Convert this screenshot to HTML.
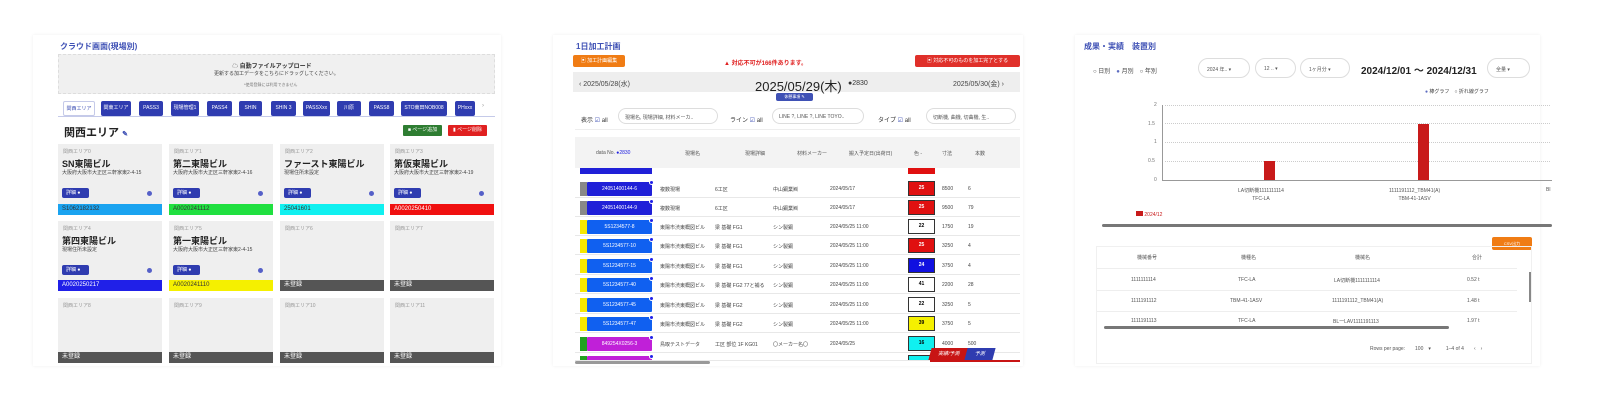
<!DOCTYPE html>
<html><head><meta charset="utf-8">
<style>
*{margin:0;padding:0;box-sizing:border-box}
body{width:1600px;height:406px;background:#fff;position:relative;overflow:hidden;font-family:"Liberation Sans","Noto Sans CJK JP",sans-serif;color:#333}
.a{position:absolute;white-space:nowrap}
.ttl{color:#3f51b5;font-weight:bold;font-size:8px}
.tab{position:absolute;top:101px;height:15px;background:#2f3cb0;color:#fff;font-size:5px;line-height:15px;text-align:center;border-radius:2px}
.card{position:absolute;width:104px;background:#efefef}
.card .lb{position:absolute;left:5px;top:4px;font-size:5px;color:#999}
.card .nm{position:absolute;left:4px;top:13px;font-size:9px;font-weight:bold;color:#222}
.card .ad{position:absolute;left:4px;top:25px;font-size:5px;color:#444}
.card .bt{position:absolute;left:4px;top:44px;width:27px;height:10px;background:#2f3cb0;border-radius:2px;color:#fff;font-size:5px;line-height:10px;padding-left:4px}
.card .gr{position:absolute;right:10px;top:47px;width:5px;height:5px;border-radius:50%;background:#5560c8}
.card .bar{position:absolute;left:0;bottom:0;width:104px;height:11px;font-size:6px;line-height:11px;padding-left:4px;color:#333}
.th{position:absolute;font-size:5px;color:#555}
.row{position:absolute;left:575px;width:445px;height:19px;border-bottom:1px solid #e8e8e8}
.row span{position:absolute;font-size:5px;color:#444;top:7px}
.sel{position:absolute;height:20px;border:1px solid #ddd;border-radius:10px;font-size:5px;color:#555;padding:7px 8px}
</style></head><body>

<!-- panel 1 -->
<div class="a" style="left:33px;top:35px;width:468px;height:331px;background:#fff;box-shadow:0 0 3px #eee"></div>
<div class="a ttl" style="left:60px;top:41px">クラウド画面(現場別)</div>
<div class="a" style="left:58px;top:54px;width:437px;height:40px;background:#f0f0f0;border:1px dashed #ddd"></div>
<div class="a" style="left:232px;top:61px;font-size:6px;font-weight:bold;color:#333">☁ 自動ファイルアップロード</div>
<div class="a" style="left:214px;top:70px;font-size:5px;color:#444">更新する加工データをこちらにドラッグしてください。</div>
<div class="a" style="left:244px;top:82px;font-size:4px;color:#777">*使用登録には利用できません</div>
<div class="a" style="left:58px;top:116px;width:437px;height:1px;background:#c5cae9"></div>
<div class="tab" style="left:63px;width:32px;background:#fff;color:#3f51b5;border:1px solid #c5cae9">関西エリア</div>
<div class="tab" style="left:101px;width:30px">関東エリア</div>
<div class="tab" style="left:139px;width:24px">PASS3</div>
<div class="tab" style="left:171px;width:28px">現場管理1</div>
<div class="tab" style="left:207px;width:25px">PASS4</div>
<div class="tab" style="left:239px;width:23px">SHIN</div>
<div class="tab" style="left:271px;width:25px">SHIN 3</div>
<div class="tab" style="left:303px;width:27px">PASSXxx</div>
<div class="tab" style="left:337px;width:24px">川原</div>
<div class="tab" style="left:369px;width:25px">PASS8</div>
<div class="tab" style="left:401px;width:46px">STO東田NOB008</div>
<div class="tab" style="left:455px;width:20px">PHxxx</div>
<div class="a" style="left:482px;top:103px;font-size:6px;color:#999">›</div>
<div class="a" style="left:64px;top:124px;font-size:11px;font-weight:bold;color:#222">関西エリア <span style="color:#3f51b5;font-size:7px">✎</span></div>
<div class="a" style="left:403px;top:125px;width:39px;height:11px;background:#2e7d32;color:#fff;font-size:5px;line-height:11px;text-align:center;border-radius:1px">■ ページ追加</div>
<div class="a" style="left:448px;top:125px;width:39px;height:11px;background:#e02020;color:#fff;font-size:5px;line-height:11px;text-align:center;border-radius:1px">▮ ページ削除</div>
<div id="cards"></div>

<!-- panel 2 -->
<div class="a" style="left:553px;top:35px;width:470px;height:331px;background:#fff;box-shadow:0 0 3px #eee"></div>
<div class="a ttl" style="left:576px;top:41px">1日加工計画</div>
<div class="a" style="left:573px;top:55px;width:52px;height:12px;background:#f07c14;color:#fff;font-size:5px;line-height:12px;text-align:center;border-radius:2px">▣ 加工計画編集</div>
<div class="a" style="left:724px;top:58px;font-size:6px;font-weight:bold;color:#e02020">▲ 対応不可が166件あります。</div>
<div class="a" style="left:915px;top:55px;width:105px;height:12px;background:#e0302a;color:#fff;font-size:5px;line-height:12px;text-align:center;border-radius:2px">▣ 対応不可のものを加工完了とする</div>
<div class="a" style="left:573px;top:72px;width:447px;height:20px;background:#eeeeee"></div>
<div class="a" style="left:579px;top:79px;font-size:7px;color:#444">‹ 2025/05/28(水)</div>
<div class="a" style="left:755px;top:76px;font-size:13px;color:#222">2025/05/29(木)</div>
<div class="a" style="left:848px;top:80px;font-size:7px;color:#333">●2830</div>
<div class="a" style="left:953px;top:79px;font-size:7px;color:#444">2025/05/30(金) ›</div>
<div class="a" style="left:776px;top:93px;width:37px;height:8px;background:#3f51b5;border-radius:2px;color:#fff;font-size:4px;line-height:8px;text-align:center">休憩事項 ✎</div>
<div class="a" style="left:575px;top:105px;width:445px;height:25px;border-bottom:1px solid #eee"></div>
<div class="a" style="left:581px;top:115px;font-size:6px">表示 <span style="color:#3f51b5">☑</span> all</div>
<div class="sel" style="left:618px;top:108px;width:100px;height:16px;padding:5px 6px">現場名, 現場詳細, 材料メーカ..</div>
<div class="a" style="left:730px;top:115px;font-size:6px">ライン <span style="color:#3f51b5">☑</span> all</div>
<div class="sel" style="left:772px;top:108px;width:92px;height:16px;padding:5px 6px">LINE ?, LINE ?, LINE TOYO..</div>
<div class="a" style="left:878px;top:115px;font-size:6px">タイプ <span style="color:#3f51b5">☑</span> all</div>
<div class="sel" style="left:926px;top:108px;width:90px;height:16px;padding:5px 6px">切断機, 曲機, 切曲機, 生..</div>
<div class="a" style="left:575px;top:137px;width:445px;height:31px;background:#f3f3f3"></div>
<div class="th" style="left:596px;top:150px">data No. <span style="color:#2020e0">●2830</span></div>
<div class="th" style="left:685px;top:150px">現場名</div>
<div class="th" style="left:745px;top:150px">現場詳細</div>
<div class="th" style="left:797px;top:150px">材料メーカー</div>
<div class="th" style="left:849px;top:150px">搬入予定日(出荷日)</div>
<div class="th" style="left:914px;top:150px">色 -</div>
<div class="th" style="left:942px;top:150px">寸法</div>
<div class="th" style="left:975px;top:150px">本数</div>
<div id="rows"></div>
<div class="a" style="left:575px;top:361px;width:135px;height:3px;background:#999;border-radius:2px"></div>
<div class="a" style="left:930px;top:348px;width:38px;height:12px;background:#c81414;color:#fff;font-size:5px;line-height:12px;text-align:center;transform:skewX(-15deg)">実績/予測</div>
<div class="a" style="left:966px;top:348px;width:28px;height:12px;background:#2f3cb0;color:#fff;font-size:5px;line-height:12px;text-align:center;transform:skewX(-15deg)">予測</div>
<div class="a" style="left:930px;top:360px;width:90px;height:2px;background:#c81414"></div>

<!-- panel 3 -->
<div class="a" style="left:1075px;top:35px;width:465px;height:331px;background:#fff;box-shadow:0 0 3px #eee"></div>
<div class="a ttl" style="left:1084px;top:41px">成果・実績　装置別</div>
<div class="a" style="left:1093px;top:66px;font-size:6px;color:#444">○ 日別　<span style="color:#5c6bc0">●</span> 月別　○ 年別</div>
<div class="sel" style="left:1198px;top:58px;width:52px">2024 年..  ▾</div>
<div class="sel" style="left:1255px;top:58px;width:41px">12 ..  ▾</div>
<div class="sel" style="left:1300px;top:58px;width:50px">1ヶ月分  ▾</div>
<div class="a" style="left:1361px;top:62px;font-size:10px;font-weight:bold;color:#222">2024/12/01 ～ 2024/12/31</div>
<div class="sel" style="left:1487px;top:58px;width:43px">全量  ▾</div>
<div class="a" style="left:1425px;top:88px;font-size:5px;color:#444"><span style="color:#5c6bc0">●</span> 棒グラフ　○ 折れ線グラフ</div>
<div class="a" style="left:1162px;top:105px;width:1px;height:75px;background:#999"></div>
<div class="a" style="left:1162px;top:180px;width:390px;height:1px;background:#999"></div>
<div class="a" style="left:1165px;top:105px;width:385px;border-top:1px dotted #ccc"></div>
<div class="a" style="left:1165px;top:123px;width:385px;border-top:1px dotted #ccc"></div>
<div class="a" style="left:1165px;top:142px;width:385px;border-top:1px dotted #ccc"></div>
<div class="a" style="left:1165px;top:161px;width:385px;border-top:1px dotted #ccc"></div>
<div class="a" style="left:1154px;top:102px;font-size:5px;color:#777">2</div>
<div class="a" style="left:1148px;top:121px;font-size:5px;color:#777">1.5</div>
<div class="a" style="left:1154px;top:139px;font-size:5px;color:#777">1</div>
<div class="a" style="left:1148px;top:158px;font-size:5px;color:#777">0.5</div>
<div class="a" style="left:1154px;top:177px;font-size:5px;color:#777">0</div>
<div class="a" style="left:1264px;top:161px;width:11px;height:19px;background:#c81a1a"></div>
<div class="a" style="left:1418px;top:124px;width:11px;height:56px;background:#c81a1a"></div>
<div class="a" style="left:1238px;top:187px;font-size:5px;color:#555;text-align:center;line-height:8px">LA切断機1111111114<br>TFC-LA</div>
<div class="a" style="left:1389px;top:187px;font-size:5px;color:#555;text-align:center;line-height:8px">1111191112_TBM41(A)<br>TBM-41-1ASV</div>
<div class="a" style="left:1546px;top:187px;font-size:5px;color:#555">Bl</div>
<div class="a" style="left:1136px;top:211px;font-size:5px;color:#c81a1a"><span style="display:inline-block;width:7px;height:5px;background:#c81a1a"></span> 2024/12</div>
<div class="a" style="left:1102px;top:224px;width:450px;height:3px;background:#777;border-radius:2px"></div>
<div class="a" style="left:1492px;top:237px;width:40px;height:13px;background:#f07c14;border-radius:2px;color:#fff;font-size:4px;line-height:13px;text-align:center">CSV出力</div>
<div class="a" style="left:1096px;top:246px;width:436px;height:118px;border:1px solid #f0f0f0"></div>
<div class="th" style="left:1137px;top:254px">機械番号</div>
<div class="th" style="left:1241px;top:254px">機種名</div>
<div class="th" style="left:1355px;top:254px">機械名</div>
<div class="th" style="left:1472px;top:254px">合計</div>
<div class="a" style="left:1097px;top:268px;width:420px;border-top:1px solid #eee"></div>
<div class="th" style="left:1131px;top:277px">1111111114</div><div class="th" style="left:1238px;top:277px">TFC-LA</div><div class="th" style="left:1334px;top:277px">LA切断機1111111114</div><div class="th" style="left:1467px;top:277px">0.52 t</div>
<div class="a" style="left:1097px;top:290px;width:420px;border-top:1px solid #eee"></div>
<div class="th" style="left:1131px;top:298px">1111191112</div><div class="th" style="left:1230px;top:298px">TBM-41-1ASV</div><div class="th" style="left:1332px;top:298px">1111191112_TBM41(A)</div><div class="th" style="left:1467px;top:298px">1.48 t</div>
<div class="a" style="left:1097px;top:311px;width:420px;border-top:1px solid #eee"></div>
<div class="th" style="left:1131px;top:318px">1111191113</div><div class="th" style="left:1238px;top:318px">TFC-LA</div><div class="th" style="left:1333px;top:318px">BL一LAV1111191113</div><div class="th" style="left:1467px;top:318px">1.97 t</div>
<div class="a" style="left:1529px;top:272px;width:2px;height:30px;background:#888"></div>
<div class="a" style="left:1104px;top:326px;width:345px;height:3px;background:#777;border-radius:2px"></div>
<div class="th" style="left:1370px;top:345px">Rows per page:　　100　▾　　　1–4 of 4　　‹　›</div>

<script>
var c=document.getElementById('cards'),h='';
var xs=[58,169,280,390],ys=[[144,215],[221,291],[298,363]];
var data=[
['関西エリア0','SN東陽ビル','大阪府大阪市大正区三軒家東2-4-15','S1062182132','#1aa3f0'],
['関西エリア1','第二東陽ビル','大阪府大阪市大正区三軒家東2-4-16','A0020241112','#20e040'],
['関西エリア2','ファースト東陽ビル','現場住所未設定','25041601','#10f0f0'],
['関西エリア3','第仮東陽ビル','大阪府大阪市大正区三軒家東2-4-19','A0020250410','#f01010'],
['関西エリア4','第四東陽ビル','現場住所未設定','A0020250217','#2020e8'],
['関西エリア5','第一東陽ビル','大阪府大阪市大正区三軒家東2-4-15','A0020241110','#f5f000'],
['関西エリア6','','','',''],['関西エリア7','','','',''],
['関西エリア8','','','',''],['関西エリア9','','','',''],['関西エリア10','','','',''],['関西エリア11','','','','']];
data.forEach(function(d,i){var r=Math.floor(i/4),col=i%4,y=ys[r];
h+='<div class="card" style="left:'+xs[col]+'px;top:'+y[0]+'px;height:'+(y[1]-y[0])+'px"><div class="lb">'+d[0]+'</div>';
if(d[1]){h+='<div class="nm">'+d[1]+'</div><div class="ad">'+d[2]+'</div><div class="bt">詳細 ●</div><div class="gr"></div><div class="bar" style="background:'+d[4]+';color:'+(d[4]=='#f01010'||d[4]=='#2020e8'?'#fff':'#333')+'">'+d[3]+'</div>';}
else h+='<div class="bar" style="background:#555;color:#fff">未登録</div>';
h+='</div>';});
c.innerHTML=h;
var R=document.getElementById('rows'),s='';
var rows=[
[170,'#888','#2020d8','','','','','#e01010','',''],
[179,'#888','#2020d8','24051400144-6','複数現場','6工区','中山鋼業㈱','2024/05/17','#e01010','25','8500','6'],
[198,'#888','#2020d8','24051400144-9','複数現場','6工区','中山鋼業㈱','2024/05/17','#e01010','25','9500','79'],
[217,'#f5e800','#1060f0','5S1234577-8','東陽市渋東概図ビル','梁 基礎 FG1','シン製鋼','2024/05/25 11:00','#fff','22','1750','19'],
[236,'#f5e800','#1060f0','5S1234577-10','東陽市渋東概図ビル','梁 基礎 FG1','シン製鋼','2024/05/25 11:00','#e01010','25','3250','4'],
[256,'#f5e800','#1060f0','5S1234577-15','東陽市渋東概図ビル','梁 基礎 FG1','シン製鋼','2024/05/25 11:00','#1010e0','24','3750','4'],
[275,'#f5e800','#1060f0','5S1234577-40','東陽市渋東概図ビル','梁 基礎 FG2 77と補る','シン製鋼','2024/05/25 11:00','#fff','41','2200','28'],
[295,'#f5e800','#1060f0','5S1234577-45','東陽市渋東概図ビル','梁 基礎 FG2','シン製鋼','2024/05/25 11:00','#fff','22','3250','5'],
[314,'#f5e800','#1060f0','5S1234577-47','東陽市渋東概図ビル','梁 基礎 FG2','シン製鋼','2024/05/25 11:00','#f5f000','39','3750','5'],
[334,'#20a020','#c020d8','849254X0256-3','鳥取テストデータ','工区 部位 1F KG01','〇メーカー名〇','2024/05/25','#10f0f0','16','4000','500'],
[353,'#20a020','#c020d8','','','','','','#10f0f0','','','']];
rows.forEach(function(d,i){ if(i==0){s+='<div class="a" style="left:580px;top:168px;width:72px;height:6px;background:#2020d8"></div><div class="a" style="left:908px;top:168px;width:27px;height:6px;background:#e01010"></div>';return;}
var y=d[0];var top=y;var hh=(i==rows.length-1)?8:19;
s+='<div class="row" style="top:'+top+'px;height:'+hh+'px;overflow:hidden">';
s+='<div class="a" style="left:5px;top:3px;width:7px;height:14px;background:'+d[1]+'"></div>';
s+='<div class="a" style="left:12px;top:3px;width:65px;height:14px;background:'+d[2]+';border-radius:1px;color:#fff;font-size:5px;line-height:14px;text-align:center">'+d[3]+'</div>';
s+='<div class="a" style="left:74px;top:1px;width:5px;height:5px;border-radius:50%;background:#2020e8;border:1px solid #fff"></div>';
s+='<span style="left:85px">'+d[4]+'</span><span style="left:140px">'+d[5]+'</span><span style="left:198px">'+d[6]+'</span><span style="left:255px">'+d[7]+'</span>';
s+='<div class="a" style="left:333px;top:2px;width:27px;height:15px;background:'+d[8]+';border:1px solid #333;font-size:5px;font-weight:bold;line-height:13px;text-align:center;color:'+(d[8]=='#e01010'||d[8]=='#1010e0'?'#fff':'#000')+'">'+d[9]+'</div>';
s+='<span style="left:367px">'+d[10]+'</span><span style="left:393px">'+d[11]+'</span></div>';});
R.innerHTML=s;
</script>
</body></html>
